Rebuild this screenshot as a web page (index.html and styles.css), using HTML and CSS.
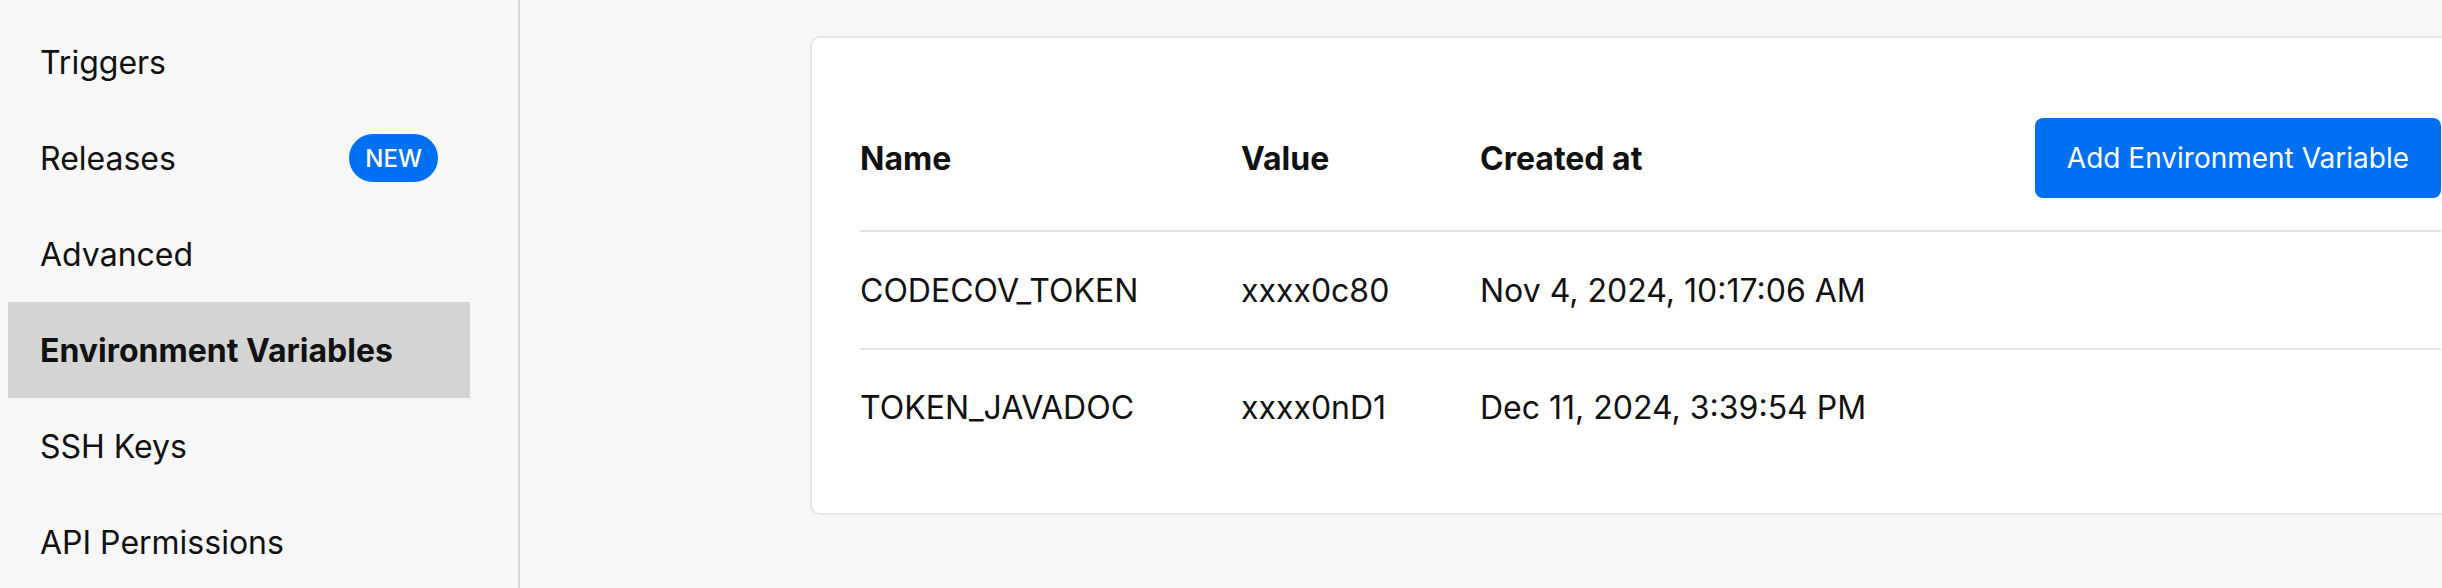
FILE: index.html
```html
<!DOCTYPE html>
<html lang="en">
<head>
<meta charset="utf-8">
<title>Environment Variables</title>
<link rel="stylesheet" href="styles.css">
</head>
<body>
<div class="layout">
  <aside class="sidebar">
    <nav class="nav">
      <a class="nav-item">Triggers</a>
      <a class="nav-item">Releases <span class="badge">NEW</span></a>
      <a class="nav-item">Advanced</a>
      <a class="nav-item active">Environment Variables</a>
      <a class="nav-item">SSH Keys</a>
      <a class="nav-item">API Permissions</a>
    </nav>
  </aside>
  <main class="main">
    <section class="card">
      <div class="row head">
        <div class="cell">Name</div>
        <div class="cell">Value</div>
        <div class="cell">Created at</div>
        <div class="cell actions"><button class="btn">Add Environment Variable</button></div>
      </div>
      <div class="row">
        <div class="cell">CODECOV_TOKEN</div>
        <div class="cell">xxxx0c80</div>
        <div class="cell">Nov 4, 2024, 10:17:06 AM</div>
        <div class="cell"></div>
      </div>
      <div class="row last">
        <div class="cell">TOKEN_JAVADOC</div>
        <div class="cell">xxxx0nD1</div>
        <div class="cell">Dec 11, 2024, 3:39:54 PM</div>
        <div class="cell"></div>
      </div>
    </section>
  </main>
</div>
</body>
</html>
```
FILE: styles.css
```css
* { box-sizing: border-box; }
html, body {
  margin: 0;
  padding: 0;
  height: 100%;
  background: #f7f7f7;
  overflow: hidden;
}
body {
  font-family: Inter, "Noto Sans", sans-serif;
  color: #111111;
}
.layout {
  display: flex;
  height: 100%;
}
.sidebar {
  width: 520px;
  flex: 0 0 520px;
  border-right: 2px solid #d6d6d6;
  background: #f7f7f7;
  padding: 14px 48px 0 8px;
}
.nav {
  display: flex;
  flex-direction: column;
}
.nav-item {
  display: flex;
  align-items: center;
  justify-content: space-between;
  height: 96px;
  padding: 0 32px;
  font-size: 32px;
  color: #111111;
  text-decoration: none;
}
.nav-item.active {
  background: #d4d4d4;
  font-weight: 700;
}
.badge {
  display: inline-flex;
  align-items: center;
  height: 48px;
  padding: 0 16px;
  border-radius: 24px;
  background: #0070f3;
  color: #ffffff;
  font-size: 24px;
  font-weight: 500;
}
.main {
  flex: 1;
  min-width: 0;
  padding: 36px 0 0 290px;
  overflow: hidden;
}
.card {
  width: 1681px;
  background: #ffffff;
  border: 2px solid #e6e6e6;
  border-radius: 10px;
  padding: 48px;
}
.row {
  display: grid;
  grid-template-columns: 381px 239px 1fr auto;
  align-items: center;
  height: 118px;
  border-bottom: 2px solid #e3e3e3;
  font-size: 32px;
}
.row.head {
  height: 146px;
  font-weight: 700;
}
.row.last {
  border-bottom: none;
  height: 115px;
}
.actions {
  display: flex;
  justify-content: flex-end;
}
.btn {
  height: 80px;
  padding: 0 32px;
  border: none;
  border-radius: 8px;
  background: #0070f3;
  color: #ffffff;
  font-family: Inter, "Noto Sans", sans-serif;
  font-size: 28px;
  font-weight: 400;
}
```
